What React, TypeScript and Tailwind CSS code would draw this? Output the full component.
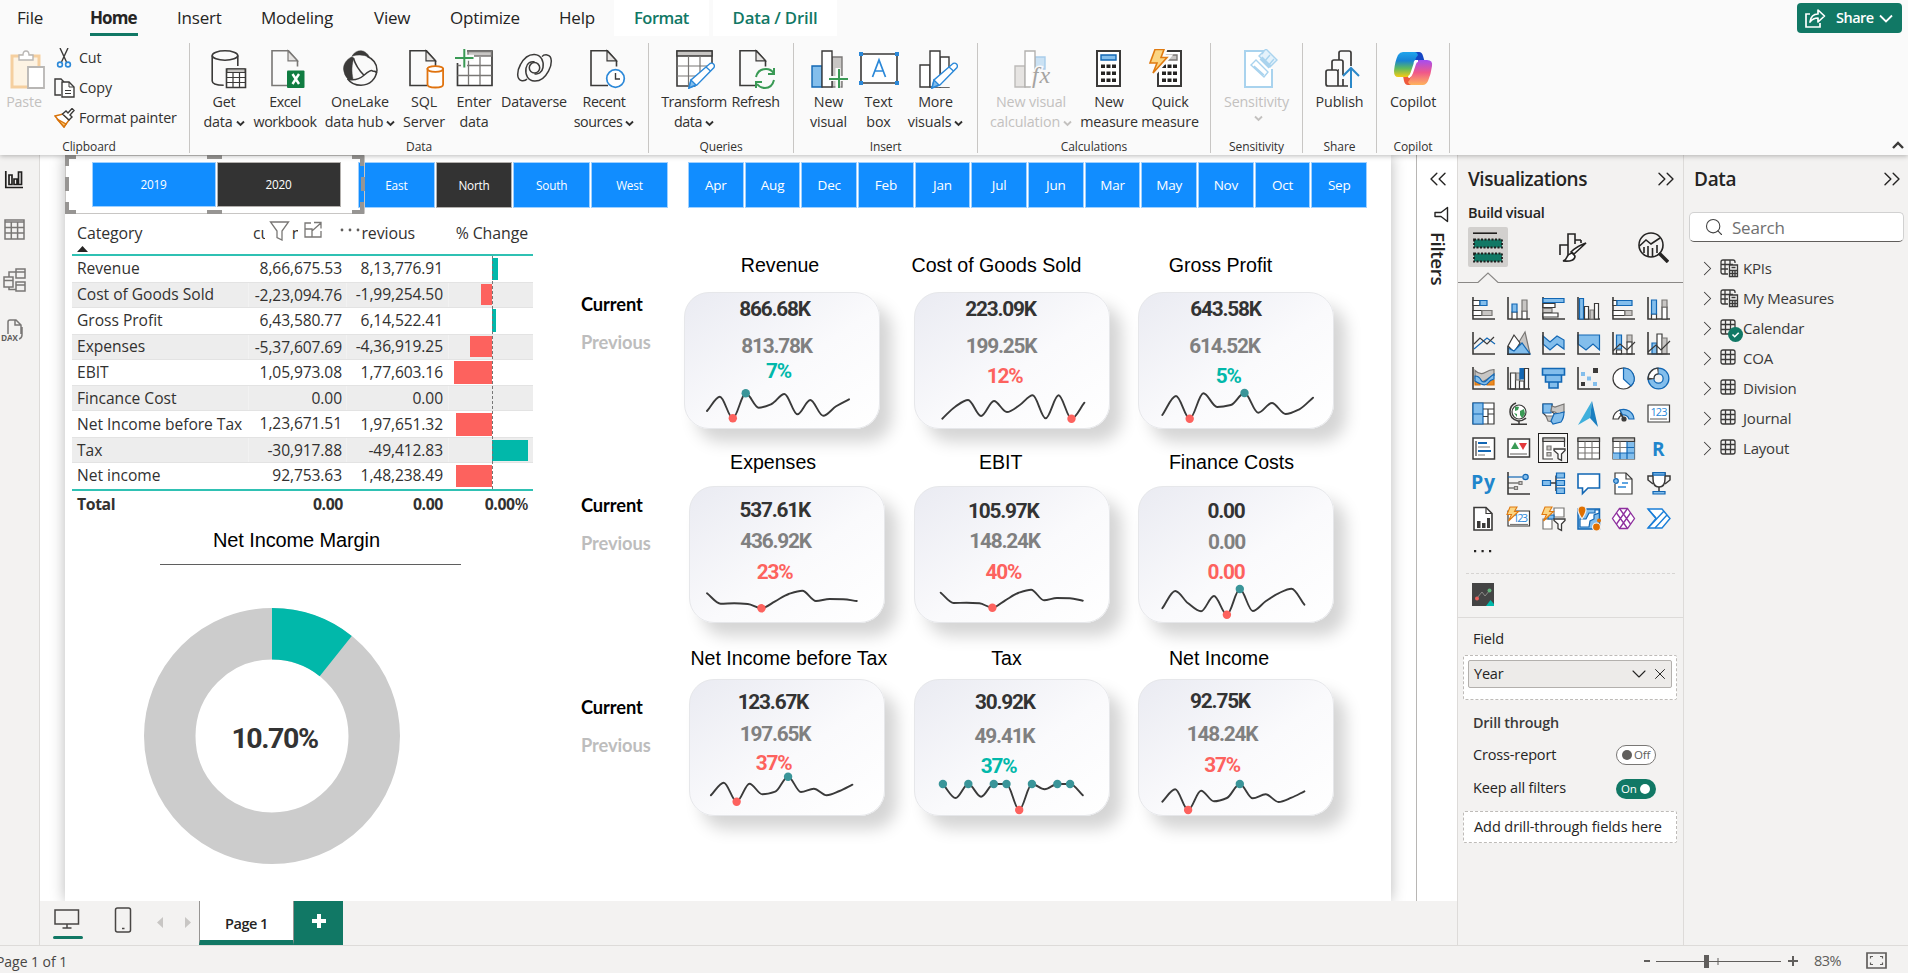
import React from "react";
import { ChevronDown, ChevronRight, ChevronsLeft, ChevronsRight, Search, X } from "lucide-react";

type Kids = { children?: React.ReactNode };

const INK = "#3b3a39";
const BLUE = "#1267b4";
const SKY = "#83beec";
const GREY = "#797775";
const SILVER = "#c8c6c4";

/* ------------------------------------------------------------------ */
/* Ribbon icons                                                        */
/* ------------------------------------------------------------------ */

function Glyph({ w = 38, h = 40, children }: Kids & { w?: number; h?: number }) {
  return (
    <svg width={w} height={h} viewBox={`0 0 ${w} ${h}`} fill="none" stroke={INK} strokeWidth="1.4" className="block shrink-0">
      {children}
    </svg>
  );
}

const Sheet = ({ x = 0 }: { x?: number }) => (
  <g transform={`translate(${x} 0)`} strokeWidth="1.600">
    <path d="M18 36.500H1V1.800h16.500l9 10V17.500" fill="none" />
    <path d="M17 1.800v10h9.500z" fill="#e6e4e2" strokeWidth="1.200" />
  </g>
);

const Pencil = () => (
  <g stroke="#2b88d8">
    <path d="M15 39l2-8L36 14.500q2-1 3.500.5t.5 3.500L23 36z" fill="#fff" transform="translate(-1 0)" />
    <path d="M14 39l2-8 5 5z" fill={SKY} />
    <path d="M31 18l4.500 4" />
  </g>
);

const PasteIcon = () => (
  <Glyph>
    <path d="M5 7h27v31H5z" fill="#fdf3e3" stroke="#f5cf9f" strokeWidth="3" />
    <path d="M12 11V6h4q0-4 3-4t3 4h4v5z" fill="#fff" stroke="#b8b6b4" />
    <path d="M21 18h16v21H21z" fill="#fff" stroke="#b8b6b4" strokeWidth="1.800" />
  </Glyph>
);
const CutIcon = () => (
  <Glyph w={20} h={20}>
    <path d="M6 0l6.500 14M14 0L7.500 14" />
    <circle cx="6" cy="16.500" r="2.400" stroke="#2b88d8" strokeWidth="1.600" />
    <circle cx="14" cy="16.500" r="2.400" stroke="#2b88d8" strokeWidth="1.600" />
  </Glyph>
);
const CopyIcon = () => (
  <Glyph w={21} h={20}>
    <path d="M7 17H1V1h6l3 3" />
    <path d="M8 4h7l5 5v10H8z" fill="#fff" />
    <path d="M15 4v5h5M11 12.500h6M11 15.500h6" strokeWidth="1" />
  </Glyph>
);
const PainterIcon = () => (
  <Glyph w={21} h={20}>
    <path d="M1 8l8-2 6 6-5 7z" fill="#fff" stroke="#d8730b" />
    <path d="M3 11l9 5-2 3z" fill="#f9c46b" stroke="#d8730b" />
    <path d="M8.500 6L12 3l2 2 4-4.500 2 2L16 7l2 2-3 3z" fill="#fff" />
  </Glyph>
);
const DatabaseIcon = () => (
  <Glyph w={36}>
    <ellipse cx="14" cy="6.500" rx="12.800" ry="4.700" strokeWidth="1.600" />
    <path d="M1.200 6.500V32q0 4 11.500 4.300M26.800 6.500V17" strokeWidth="1.600" />
    <path d="M15.500 20h19v18.500h-19z" fill="#fff" strokeWidth="1.600" />
    <path d="M16 20h18v3.500H16z" fill={SILVER} strokeWidth="1" />
    <path d="M16 28.500h18M16 33.500h18M22 24v14M28.500 24v14" strokeWidth="1.200" />
  </Glyph>
);
const ExcelIcon = () => (
  <Glyph w={36}>
    <g stroke={GREY}><Sheet x={1} /></g>
    <rect x="17" y="21.500" width="17.500" height="17.500" rx="1" fill="#107c41" stroke="none" />
    <path d="M22.500 25l6.500 10M29 25l-6.500 10" stroke="#fff" strokeWidth="2.400" />
  </Glyph>
);
const OneLakeIcon = () => (
  <Glyph w={36}>
    <g transform="translate(1 1.200)">
      <path d="M24 6C31 9 34 14.500 34 20c-1 9-7 15-16 15C12 35 7 32 4.500 28.500" strokeWidth="1.500" />
      <path d="M9 6.500C3 9.500.500 14 .500 19q.500 6 4.500 10 3.500 0 5-.500C8.500 22 8.500 14 11 8z" fill={INK} strokeWidth="0.500" />
      <path d="M9 6Q12 .500 18 .500q5.500.500 8.500 6.500Q17 3 9 6z" fill={INK} strokeWidth="0.500" />
      <path d="M10.500 8Q13 17 21 25M5 29q9 2 16-4t8.500-4.200q3.500 0 4.300 2" strokeWidth="1.500" />
    </g>
  </Glyph>
);
const SqlIcon = () => (
  <Glyph w={36}>
    <Sheet x={0} />
    <g stroke="#e0730f" strokeWidth="1.800">
      <path d="M18.500 20v15.500q0 3 7.800 3t7.800-3V20z" fill="#fff" />
      <ellipse cx="26.300" cy="20" rx="7.800" ry="2.800" fill="#fff" />
    </g>
  </Glyph>
);
const EnterDataIcon = () => (
  <Glyph w={40}>
    <path d="M3.500 2h34.500v34.500H3.500z" fill="#fff" strokeWidth="1.700" />
    <path d="M14 2.500h23.500v4.500H14z" fill={SILVER} stroke={GREY} />
    <path d="M3.500 16.500h34M3.500 26.500h34M14.500 8v28M26 8v28" stroke={GREY} strokeWidth="1.300" />
    <path d="M0 0h13v14H0zM13 6h6v5h-6z" fill="#fafafa" stroke="none" />
    <path d="M10 0v19M1 8.700h19" stroke="#fafafa" strokeWidth="6" />
    <path d="M10.300 0v18.500M1 9h18.500" stroke="#3a9a55" strokeWidth="2" />
  </Glyph>
);
const dataverseArm = "M10 25.500q-1.500 2-5 1.700C-1 26.500 0 17 3.500 11 7.500 3.500 13 .800 17.500 1c6.500.500 9.500 6 8.500 13-1 5.500-5 7-8.500 6.300";
const DataverseIcon = () => (
  <Glyph w={37}>
    <g transform="translate(1 4.500)" strokeWidth="1.500">
      <path d={dataverseArm} />
      <path d={dataverseArm} transform="rotate(180 17.500 14.300)" />
      <circle cx="17.500" cy="14.300" r="5.200" />
    </g>
  </Glyph>
);
const RecentIcon = () => (
  <Glyph w={36}>
    <Sheet x={0} />
    <circle cx="25.500" cy="29.500" r="8.800" fill="#fff" stroke="#2b88d8" strokeWidth="1.700" />
    <path d="M25.500 24V30h4.500" />
  </Glyph>
);
const TransformIcon = () => (
  <Glyph w={40}>
    <path d="M2 2h35v35H2z" fill="#fff" strokeWidth="1.600" />
    <path d="M2 2h35v5H2z" fill={SILVER} />
    <path d="M2 17h35M2 27h35M13.500 7v30M25 7v30" stroke={GREY} strokeWidth="1.200" />
    <path d="M20 38h20V15z" fill="#fafafa" stroke="none" />
    <Pencil />
  </Glyph>
);
const RefreshIcon = () => (
  <Glyph>
    <Sheet x={1} />
    <g stroke="#3a9a55" strokeWidth="2">
      <path d="M18 28q2-8 10-8 5 0 7.500 4M36 19v6h-6M36 31q-2 8-9 8-5 0-8-4M18 39v-6h6" />
    </g>
  </Glyph>
);
const NewVisualIcon = () => (
  <Glyph>
    <path d="M1 17h10v21H1z" fill={SKY} stroke={BLUE} />
    <path d="M21 8h10v30H21z" fill={SILVER} stroke={GREY} />
    <path d="M11 2h10v36H11z" fill="#fff" />
    <path d="M27 19v20M18 29.500h19" stroke="#fafafa" strokeWidth="5" />
    <path d="M28 20v19M18 30h19" stroke="#3a9a55" strokeWidth="2" />
  </Glyph>
);
const TextBoxIcon = () => (
  <Glyph w={40}>
    <path d="M2 5h36v29H2z" fill="#fff" strokeWidth="1.600" />
    <path d="M0 3h4v4H0zM36 3h4v4h-4zM0 32h4v4H0zM36 32h4v4h-4z" fill="#2b88d8" stroke="none" />
    <path d="M13.500 28L20 11l6.500 17M15.500 22h9" stroke="#2b88d8" strokeWidth="1.700" />
  </Glyph>
);
const MoreVisualsIcon = () => (
  <Glyph w={40}>
    <path d="M2 16h10v22H2zM22 8h9v30h-9z" fill="#fff" />
    <path d="M12 2h10v36H12z" fill="#fff" />
    <path d="M16 38h22V16z" fill="#fafafa" stroke="none" />
    <Pencil />
  </Glyph>
);
const NewCalcIcon = () => (
  <Glyph>
    <path d="M1 17h10v21H1z" fill="#e6e4e2" stroke="#bdbbb9" />
    <path d="M21 8h10v12H21z" fill="#cbe2f4" stroke="#a9cdea" />
    <path d="M11 2h10v36H11z" fill="#fff" stroke="#b3b1af" />
    <text x="18" y="34" fill="#a5a3a1" stroke="#fafafa" strokeWidth="3" paintOrder="stroke" fontSize="24" fontStyle="italic" fontFamily="Liberation Serif, serif" textLength="18">fx</text>
  </Glyph>
);
const Calculator = ({ grey = false }: { grey?: boolean }) => (
  <g>
    <path d="M7 2h23v35H7z" fill="#fff" strokeWidth="2" />
    <path d="M11 6h15v5H11z" fill={grey ? SILVER : SKY} stroke={grey ? GREY : BLUE} />
    {[15.5, 22.5, 29.5].map((y) => (
      <path key={y} d={`M11 ${y}h4v3.500h-4zM16.500 ${y}h4v3.500h-4zM22 ${y}h4v3.500h-4z`} fill="#252423" stroke="none" />
    ))}
  </g>
);
const NewMeasureIcon = () => (<Glyph><Calculator /></Glyph>);
const QuickMeasureIcon = () => (
  <Glyph>
    <g transform="translate(4 0)"><Calculator grey /></g>
    <path d="M8 0h10l-3 8h6L5 27l4-12H2z" fill="#fafafa" stroke="#fafafa" strokeWidth="5" />
    <path d="M8 0.500h9l-3 8h6L6 24l4-10H3z" fill="#fbd583" stroke="#e07a10" strokeWidth="1.600" />
  </Glyph>
);
const SensitivityIcon = () => (
  <Glyph>
    <g stroke="#a9d3ee">
      <path d="M24 2H5v36h27V20" fill="#fff" strokeWidth="2" />
      <path d="M19 7l7-7 11 11-7 7zM24 2l-2 3M30 6l-6 7M34 10l-6 7" fill="#e4f2fb" />
      <path d="M11 16l5-5 12 12-4 5zM14 17l10 9" fill="#fff" />
      <path d="M21 9l9 9" strokeWidth="4" />
    </g>
  </Glyph>
);
const PublishIcon = () => (
  <Glyph>
    <g strokeWidth="1.700">
      <path d="M25 37H5q-2 0-2-2V23q0-2 2-2h8q2 0 2 2v14" />
      <path d="M9 21v-8q0-2 2-2h7q2 0 2 2v13M15 21h1" />
      <path d="M16 11V4q0-2 2-2h8q2 0 2 2v13" />
      <path d="M20 30v7" />
    </g>
    <path d="M28 39V20M20 27l8-8 8 8" stroke="#2b88c8" strokeWidth="2" />
  </Glyph>
);
const CopilotIcon = () => (
  <Glyph w={40}>
    <defs>
      <linearGradient id="cpA" x1="0" y1="0" x2="0" y2="1"><stop offset="0" stopColor="#21a5ec" /><stop offset=".35" stopColor="#1883d4" /><stop offset=".65" stopColor="#5db960" /><stop offset="1" stopColor="#f5cc14" /></linearGradient>
      <linearGradient id="cpB" x1="0" y1="0" x2="0" y2="1"><stop offset="0" stopColor="#a44df2" /><stop offset=".5" stopColor="#f0588a" /><stop offset="1" stopColor="#ffb45c" /></linearGradient>
    </defs>
    <g stroke="none">
      <path d="M20 3h6q3 0 4 4l1.500 5H26q-3 0-4 3z" fill="#1546c4" />
      <path d="M20 36h-5q-3 0-4-4l-1-5h7q3 0 4-3z" fill="#ef5a3c" />
      <path d="M10 3h12q2 0 3 3-2 2-3 6l-3 12q-1 4-5 4H5q-4 0-4-6Q2 12 5 6q2-3 5-3z" fill="url(#cpA)" />
      <path d="M30 36H18q-2 0-3-3 2-2 3-6l4-12q1-4 5-4h7q6 0 5 6-1 8-4 15-2 4-5 4z" fill="url(#cpB)" />
      <path d="M22.500 12H25q-2 0-3 3l-3 9q-1 3-3 4h-.5q2-1 3-4l3-9q0-2 1-3z" fill="#fff" stroke="#fff" strokeWidth="2" />
    </g>
  </Glyph>
);

/* ------------------------------------------------------------------ */
/* Ribbon                                                              */
/* ------------------------------------------------------------------ */

const Caret = () => (
  <svg width="9" height="7" viewBox="0 0 9 7" className="ml-[3px] mt-[3px] inline-block" fill="none" stroke="currentColor" strokeWidth="1.900">
    <path d="M1 1.500l3.500 3.500L8 1.500" />
  </svg>
);

function Command({ w, icon, a, b, caret, shift = "", off, tight }: { w: string; icon: React.ReactNode; a: string; b?: string; caret?: boolean; shift?: string; off?: boolean; tight?: boolean }) {
  return (
    <div className={`flex flex-col items-center whitespace-nowrap text-[14.300px] leading-5 ${tight ? "tracking-[-0.450px]" : "tracking-[-0.150px]"} ${w} ${off ? "text-[#c3c1bf]" : "text-[#323130]"}`}>
      <div className={`h-[43px] ${shift}`}>{icon}</div>
      <div>{a}</div>
      <div className="flex items-center">{b}{caret && <Caret />}</div>
    </div>
  );
}

function Group({ w, name, inset = "", children }: Kids & { w: string; name: string; inset?: string }) {
  return (
    <section className={`flex h-[110px] flex-col justify-between border-r border-[#c8c6c4] ${w}`}>
      <div className="flex justify-center pt-1.5">{children}</div>
      <div className={`text-center text-[12px] leading-[13px] tracking-[-0.100px] text-[#323130] ${inset}`}>{name}</div>
    </section>
  );
}

function Ribbon() {
  return (
    <header className="relative z-20 h-[155px] bg-[#fafafa] shadow-[0_1px_5px_rgba(0,0,0,0.28)]">
      <nav className="flex h-9 items-center pl-[17px] text-[17px] leading-9 tracking-[-0.200px] text-[#252423]">
        <span className="w-[73px]">File</span>
        <span className="w-[87px]"><span className="inline-block h-9 w-12 border-b-[3px] border-[#117865] text-[17px] font-bold tracking-[-0.900px]">Home</span></span>
        <span className="w-[84px]">Insert</span>
        <span className="w-[113px]">Modeling</span>
        <span className="w-[76px]">View</span>
        <span className="w-[109px]">Optimize</span>
        <span className="w-[55px]">Help</span>
        <span className="w-[95px] bg-white text-center text-[16.500px] font-semibold tracking-[-0.500px] text-[#117865]">Format</span>
        <span className="ml-1 w-[124px] bg-white text-center text-[16.800px] font-semibold tracking-[-0.200px] text-[#117865]">Data / Drill</span>
        <button className="ml-auto mr-1.5 mt-0 flex h-[30px] w-[105px] items-center rounded-[4px] bg-[#117865] pl-2 text-[14.500px] font-semibold leading-none tracking-[-0.500px] text-white">
          <svg width="21" height="20" viewBox="0 0 21 20" fill="none" stroke="#fff" strokeWidth="1.700">
            <path d="M5 6H1v13h14v-4" />
            <path d="M5 14q1-8 8-8V2l6.500 6-6.500 6v-4q-5 0-8 4z" strokeLinejoin="round" />
          </svg>
          <span className="ml-2.5">Share</span>
          <svg width="14" height="9" viewBox="0 0 14 9" className="ml-[5px]" fill="none" stroke="#fff" strokeWidth="1.800"><path d="M1 1.500l6 6 6-6" /></svg>
        </button>
      </nav>
      <div className="mt-[7px] flex h-[110px]">
        <Group w="w-[190px]" name="Clipboard" inset="pr-[11px]">
          <div className="-mb-5 -mr-px flex w-[190px] pl-1.5">
            <Command w="w-9" shift="pl-1" icon={<PasteIcon />} a="Paste" off />
            <div className="-mt-1.5 ml-3 flex flex-col text-[14.300px] leading-[30px] tracking-[-0.150px] text-[#323130]">
              <span className="flex h-[30px] items-center gap-1"><span className="w-[21px]"><CutIcon /></span>Cut</span>
              <span className="flex h-[30px] items-center gap-1"><CopyIcon />Copy</span>
              <span className="flex h-[30px] items-center gap-1"><PainterIcon />Format painter</span>
            </div>
          </div>
        </Group>
        <Group w="w-[459px]" name="Data">
          <Command w="w-16" shift="pl-2.5" icon={<DatabaseIcon />} a="Get" b="data" caret />
          <Command w="w-[58px]" shift="pl-1.5" icon={<ExcelIcon />} a="Excel" b="workbook" tight />
          <Command w="w-[92px]" icon={<OneLakeIcon />} a="OneLake" b="data hub" caret />
          <Command w="w-9" shift="pl-1.5" icon={<SqlIcon />} a="SQL" b="Server" />
          <Command w="w-16" icon={<EnterDataIcon />} a="Enter" b="data" />
          <Command w="w-14" icon={<DataverseIcon />} a="Dataverse" />
          <Command w="w-[84px]" shift="pl-2" icon={<RecentIcon />} a="Recent" b="sources" caret tight />
        </Group>
        <Group w="w-[145px]" name="Queries">
          <div className="flex pl-[3px]">
            <Command w="w-[66px]" shift="pl-px" icon={<TransformIcon />} a="Transform" b="data" caret tight />
            <Command w="w-[57px]" shift="pl-0.5" icon={<RefreshIcon />} a="Refresh" tight />
          </div>
        </Group>
        <Group w="w-[184px]" name="Insert">
          <Command w="w-[54px]" shift="pl-0.5" icon={<NewVisualIcon />} a="New" b="visual" />
          <Command w="w-[46px]" icon={<TextBoxIcon />} a="Text" b="box" />
          <Command w="w-[68px]" shift="pl-1" icon={<MoreVisualsIcon />} a="More" b="visuals" caret />
        </Group>
        <Group w="w-[233px]" name="Calculations">
          <div className="flex pr-1">
            <Command w="w-24" shift="pl-1" icon={<NewCalcIcon />} a="New visual" b="calculation" caret off />
            <Command w="w-[60px]" icon={<NewMeasureIcon />} a="New" b="measure" />
            <Command w="w-[62px]" shift="pr-2" icon={<QuickMeasureIcon />} a="Quick" b="measure" />
          </div>
        </Group>
        <Group w="w-[92px]" name="Sensitivity">
          <Command w="w-20" shift="pl-1" icon={<SensitivityIcon />} a="Sensitivity" caret off />
        </Group>
        <Group w="w-[74px]" name="Share">
          <Command w="w-16" shift="pl-1" icon={<PublishIcon />} a="Publish" />
        </Group>
        <Group w="w-[73px]" name="Copilot">
          <Command w="w-16" icon={<CopilotIcon />} a="Copilot" />
        </Group>
        <svg width="12" height="8" viewBox="0 0 12 8" className="mb-1 ml-auto mr-1 self-end" fill="none" stroke={INK} strokeWidth="2.400">
          <path d="M1 7l5-5 5 5" />
        </svg>
      </div>
    </header>
  );
}

/* ------------------------------------------------------------------ */
/* Left rail                                                           */
/* ------------------------------------------------------------------ */

function Rail() {
  return (
    <aside className="flex w-10 shrink-0 flex-col border-r border-[#dddbd9] bg-[#f3f2f1] pt-4">
      <svg width="28" height="180" viewBox="0 0 28 180" fill="none" stroke="#605e5c" strokeWidth="1.500">
        <g stroke="#201f1e" strokeWidth="1.700">
          <path d="M5.800 0v16.500H23" />
          <path d="M9 4h3v9.500H9zM14 8h3v5.500h-3zM18.500 1h3v12.500h-3z" />
        </g>
        <path d="M5 49h19v19H5zM5 51h19M5 56.500h19M5 62h19M11.300 51v17M17.600 51v17" stroke="#797775" />
        <path d="M4 106h9v10H4zM4 109.500h9M16 98h9v9h-9zM16 101h9M16 111h9v9h-9zM16 114h9M9 106v-5h7M9 116v2.500h7" stroke="#797775" />
        <path d="M8 163v-12q0-2 2-2h6l5 5v9M15 149v5h6M22 156v8q0 3-3 4" stroke="#797775" />
        <text x="1" y="169.500" fontSize="8.500" fontWeight="700" fill="#605e5c" stroke="#f3f2f1" strokeWidth="2" paintOrder="stroke" fontFamily="Open Sans, sans-serif" textLength="17">DAX</text>
      </svg>
    </aside>
  );
}

/* ------------------------------------------------------------------ */
/* Report page                                                         */
/* ------------------------------------------------------------------ */

const rows: [string, string, string, number][] = [
  ["Revenue", "8,66,675.53", "8,13,776.91", 6],
  ["Cost of Goods Sold", "-2,23,094.76", "-1,99,254.50", -11],
  ["Gross Profit", "6,43,580.77", "6,14,522.41", 4],
  ["Expenses", "-5,37,607.69", "-4,36,919.25", -22],
  ["EBIT", "1,05,973.08", "1,77,603.16", -38],
  ["Fincance Cost", "0.00", "0.00", 0],
  ["Net Income before Tax", "1,23,671.51", "1,97,651.32", -36],
  ["Tax", "-30,917.88", "-49,412.83", 36],
  ["Net income", "92,753.63", "1,48,238.49", -36],
];

function IncomeTable() {
  return (
    <div className="absolute left-[7px] top-[60px] w-[461px] text-[15.600px] tracking-[-0.100px] text-[#323130]">
      <div className="relative flex h-[41px] border-b-2 border-[#2fc1b3] text-[15.900px] leading-9">
        <span className="w-[181px] pl-[5px]">Category</span>
        <span className="w-[99px]">current</span>
        <span>Previous</span>
        <span className="ml-auto pr-[5px]">% Change</span>
        {/* hover toolbar of the visual above */}
        <div className="absolute left-[193px] top-0 flex h-9 w-[27px] items-center bg-white pl-1">
          <svg width="21" height="20" viewBox="0 0 21 20" className="-mt-1" fill="none" stroke="#797775" strokeWidth="1.300">
            <path d="M1.500 1h18l-6.500 9v9l-5-2.500V10z" />
          </svg>
        </div>
        <div className="absolute left-[226px] top-0 flex h-9 w-[64px] items-center bg-white pl-1.5">
          <svg width="58" height="18" viewBox="0 0 58 18" className="-mt-1.5" fill="none" stroke="#797775" strokeWidth="1.300">
            <path d="M1 8V2h6M1 8h7v8H1zM8 16h9v-6M10 1.500h7v6M8.500 9.500L17 2" />
            <g fill="#605e5c" stroke="none"><circle cx="38" cy="9" r="1.400" /><circle cx="46" cy="9" r="1.400" /><circle cx="54" cy="9" r="1.400" /></g>
          </svg>
        </div>
        <svg width="11" height="6" viewBox="0 0 11 6" className="absolute left-[5px] top-[31px]"><path d="M0 6l5.500-6L11 6z" fill="#252423" /></svg>
      </div>
      <div className="relative border-b-2 border-[#2fc1b3]">
        {rows.map(([name, cur, prev, bar], i) => (
          <div key={name} className={`flex h-[25.890px] items-center leading-[25px] ${i % 2 ? "border-y border-[#e3e3e3] bg-[#ededed]" : "bg-white"}`}>
            <span className="w-[176px] pl-[5px] tracking-[-0.020px]">{name}</span>
            <span className="h-full w-[99px] border-x border-white/30 pr-1 text-right">{cur}</span>
            <span className="w-[101px] pr-[5px] text-right">{prev}</span>
            <span className="relative h-full flex-1 border-l border-white/30">
              <span
                className={`absolute inset-y-[1.500px] ${bar > 0 ? "bg-[#01b8aa]" : "bg-[#fd625e]"}`}
                style={{ left: bar < 0 ? 43 + bar : 43, width: Math.abs(bar) }}
              />
            </span>
          </div>
        ))}
        <div className="absolute inset-y-0 left-[420px] border-l border-dashed border-[#777]" />
      </div>
      <div className="flex h-[28px] text-[15.800px] font-bold leading-[26px] tracking-[-0.400px]">
        <span className="w-[176px] pl-[5px]">Total</span>
        <span className="w-[99px] pr-1 text-right">0.00</span>
        <span className="w-[101px] pr-[5px] text-right">0.00</span>
        <span className="flex-1 pr-[5px] text-right">0.00<span className="font-semibold">%</span></span>
      </div>
    </div>
  );
}

function YearSlicer() {
  return (
    <div className="absolute left-0 top-0 h-[59px] w-[300px]">
      <div className="flex gap-px pl-[26.500px] pt-[7px] text-[11.800px] leading-[42px] tracking-[-0.200px] text-white">
        <div className="h-[45px] w-[124px] border border-[#9fd0ff] bg-[#118dff] text-center">2019</div>
        <div className="h-[45px] w-[124px] border border-[#b3b0ad] bg-[#333] text-center">2020</div>
      </div>
      <svg width="302" height="60" viewBox="0 0 302 60" className="absolute left-0 top-0" fill="none">
        <path d="M0.500 0.500h299v58H0.500z" stroke="#c8c6c4" />
        <g stroke="#979593" strokeWidth="4">
          <path d="M2 11V2h9M142 2h15M287 2h10v9M2 22v14M298 22v14M2 47v10h9M142 57h15M287 57h10V47" />
        </g>
      </svg>
    </div>
  );
}

function RegionSlicer() {
  return (
    <div className="absolute left-[293px] top-[7px] flex gap-px text-[11.800px] leading-[44px] tracking-[-0.200px] text-white">
      {["East", "North", "South", "West"].map((r) => (
        <div key={r} className={`h-[46px] w-[76.700px] border text-center ${r === "North" ? "border-[#b3b0ad] bg-[#333]" : "border-[#9fd0ff] bg-[#118dff]"}`}>{r}</div>
      ))}
    </div>
  );
}

function MonthSlicer() {
  return (
    <div className="absolute left-[623px] top-[7px] flex w-[679px] gap-px text-[13.500px] leading-[44px] tracking-[-0.200px] text-white">
      {["Apr", "Aug", "Dec", "Feb", "Jan", "Jul", "Jun", "Mar", "May", "Nov", "Oct", "Sep"].map((m) => (
        <div key={m} className="h-[46px] flex-1 border border-[#9fd0ff] bg-[#118dff] text-center">{m}</div>
      ))}
    </div>
  );
}

function MarginDonut() {
  const share = 0.107 * 2 * Math.PI * 102.25;
  return (
    <div className="absolute left-[95px] top-[370px] flex w-[301px] flex-col items-center font-['Liberation_Sans',sans-serif] text-black">
      <div className="w-full border-b border-[#5f5f5f] pb-[10px] pr-7 pt-px text-center text-[20px] leading-[28px] tracking-[-0.120px]">Net Income Margin</div>
      <div className="relative ml-0 mt-[43px] h-64 w-64 -translate-x-[39px]">
        <svg width="256" height="256" viewBox="0 0 256 256" fill="none" strokeWidth="51.500">
          <circle cx="128" cy="128" r="102.250" stroke="#ccc" />
          <circle cx="128" cy="128" r="102.250" stroke="#01b8aa" strokeDasharray={`${share} 1000`} transform="rotate(-90 128 128)" />
        </svg>
        <div className="absolute inset-0 flex items-center justify-center pl-[6px] pt-1.5 font-[Roboto,sans-serif] text-[28.500px] font-bold tracking-[-1.450px] text-[#333]">10.70%</div>
      </div>
    </div>
  );
}

type Value = [string, number, number, "dark" | "grey" | "good" | "bad"];
type Kpi = {
  title: string;
  tx: number;
  ty: number;
  x: number;
  y: number;
  values: Value[];
  from: number;
  to: number;
  line: number[];
  high: number[];
  low: number[];
};

const kpis: Kpi[] = [
  { title: "Revenue", tx: 780.5, ty: 265, x: 684, y: 292, values: [["866.68K", 775, 308.5, "dark"], ["813.78K", 777, 346, "grey"], ["7%", 779, 371, "good"]], from: 707, to: 849, line: [411, 396.7, 418.3, 393.3, 407.7, 404, 394, 414.3, 400, 415.7, 406.3, 399.3], high: [3], low: [2] },
  { title: "Cost of Goods Sold", tx: 997, ty: 265, x: 914, y: 292, values: [["223.09K", 1001, 308.5, "dark"], ["199.25K", 1001.6, 346, "grey"], ["12%", 1005, 376, "bad"]], from: 942.3, to: 1084.4, line: [418.7, 406.7, 400, 416, 401, 412, 405, 395.3, 418.3, 395.3, 418.7, 402.7], high: [], low: [10] },
  { title: "Gross Profit", tx: 1221, ty: 265, x: 1138, y: 292, values: [["643.58K", 1226, 308.5, "dark"], ["614.52K", 1225, 346, "grey"], ["5%", 1228.7, 376, "good"]], from: 1162.3, to: 1313, line: [415, 396, 418.7, 393.3, 407, 405, 393, 412.7, 403, 414, 409.3, 397.7], high: [6], low: [2] },
  { title: "Expenses", tx: 773.6, ty: 462, x: 689, y: 486, values: [["537.61K", 775.3, 509.5, "dark"], ["436.92K", 776, 540.5, "grey"], ["23%", 775, 571.5, "bad"]], from: 707, to: 856.8, line: [593.3, 603.7, 603.3, 604, 608.3, 601.3, 594, 590.7, 601, 599, 599.3, 601], high: [], low: [4] },
  { title: "EBIT", tx: 1001.2, ty: 462, x: 914, y: 486, values: [["105.97K", 1003.8, 510.5, "dark"], ["148.24K", 1005, 541, "grey"], ["40%", 1003.8, 571.5, "bad"]], from: 940.7, to: 1082.8, line: [592.7, 603, 602.7, 603.3, 607.7, 600.3, 593, 589.7, 600.3, 598, 598.3, 600.7], high: [], low: [4] },
  { title: "Finance Costs", tx: 1232, ty: 462, x: 1138, y: 486, values: [["0.00", 1226.5, 510.5, "dark"], ["0.00", 1227, 541.5, "grey"], ["0.00", 1226.5, 571.5, "bad"]], from: 1162.3, to: 1304.4, line: [608.3, 591, 603.3, 611.3, 596, 614.7, 589, 611, 601.3, 593.3, 588.7, 604.7], high: [6], low: [5] },
  { title: "Net Income before Tax", tx: 789.3, ty: 658, x: 689, y: 679, values: [["123.67K", 773.4, 702, "dark"], ["197.65K", 775.6, 733.5, "grey"], ["37%", 774, 763, "bad"]], from: 710.9, to: 852.4, line: [795.3, 782.7, 801.7, 783.7, 794.3, 791.7, 776.7, 792, 788.7, 795.3, 791, 784.7], high: [6], low: [2] },
  { title: "Tax", tx: 1007, ty: 658, x: 914, y: 679, values: [["30.92K", 1005.4, 702, "dark"], ["49.41K", 1005, 735.5, "grey"], ["37%", 999, 766, "good"]], from: 942.9, to: 1082.8, line: [784, 798, 784, 796.7, 784, 784, 810, 784, 789.3, 784, 784, 795.3], high: [0, 2, 4, 5, 7, 9, 10], low: [6] },
  { title: "Net Income", tx: 1219.5, ty: 658, x: 1138, y: 679, values: [["92.75K", 1220.5, 701, "dark"], ["148.24K", 1222.6, 733.5, "grey"], ["37%", 1222.6, 765, "bad"]], from: 1162.3, to: 1304.4, line: [801.7, 789.3, 810, 790.7, 801.3, 798, 784, 798.3, 794.3, 802, 797.7, 791.3], high: [6], low: [2] },
];

const tone = { dark: "text-[#333]", grey: "text-[#808080]", good: "text-[#01b8aa]", bad: "text-[#fd625e]" };

/** Monotone cubic through equally spaced points. */
function smooth(pts: [number, number][]) {
  const n = pts.length;
  const h = pts[1][0] - pts[0][0];
  const d = pts.slice(1).map((p, i) => (p[1] - pts[i][1]) / h);
  const m = pts.map((_, i) => {
    if (i === 0) return d[0];
    if (i === n - 1) return d[n - 2];
    return d[i - 1] * d[i] <= 0 ? 0 : (2 * d[i - 1] * d[i]) / (d[i - 1] + d[i]);
  });
  let out = `M${pts[0][0]} ${pts[0][1]}`;
  for (let i = 0; i < n - 1; i++) {
    out += `C${pts[i][0] + h / 3} ${pts[i][1] + (m[i] * h) / 3} ${pts[i + 1][0] - h / 3} ${pts[i + 1][1] - (m[i + 1] * h) / 3} ${pts[i + 1][0]} ${pts[i + 1][1]}`;
  }
  return out;
}

function KpiCard({ k }: { k: Kpi }) {
  const step = (k.to - k.from) / 11;
  const pts = k.line.map((y, i): [number, number] => [k.from + i * step - k.x, y - k.y]);
  return (
    <>
      <div className="absolute -translate-x-1/2 -translate-y-1/2 whitespace-nowrap text-[19.600px] leading-6 text-black font-['Liberation_Sans',sans-serif]" style={{ left: k.tx - 65.5, top: k.ty - 155 }}>{k.title}</div>
      <div className="absolute h-[137px] w-[196px] rounded-[25px] border border-[#e6e7ea] bg-linear-to-br from-[#eaebf2] via-[#fafafc] via-55% to-white shadow-[12px_13px_16px_rgba(0,0,0,0.17)]" style={{ left: k.x - 65, top: k.y - 155 }}>
        {k.values.map(([v, x, y, t], i) => (
          <div key={i} className={`absolute -translate-x-1/2 -translate-y-1/2 whitespace-nowrap font-[Roboto,sans-serif] text-[20.800px] font-bold leading-6 tracking-[-1.200px] ${tone[t]}`} style={{ left: x - k.x - 1.5, top: y - k.y - 1 }}>{v}</div>
        ))}
        <svg width="196" height="137" viewBox="1 1 196 137" fill="none" className="absolute left-0 top-0">
          <path d={smooth(pts)} stroke="#3a3a3a" strokeWidth="1.900" strokeLinecap="round" />
          {k.high.map((i) => <circle key={i} cx={pts[i][0]} cy={pts[i][1]} r="4.200" fill="#3a9599" />)}
          {k.low.map((i) => <circle key={i} cx={pts[i][0]} cy={pts[i][1]} r="4.200" fill="#fd625e" />)}
        </svg>
      </div>
    </>
  );
}

function ReportPage() {
  return (
    <div className="relative ml-[25px] h-[746px] w-[1326px] bg-white shadow-[0_0_14px_rgba(0,0,0,0.28)]">
      <RegionSlicer />
      <YearSlicer />
      <MonthSlicer />
      <IncomeTable />
      <MarginDonut />
      {["top-[137px]", "top-[338px]", "top-[540px]"].map((t) => (
        <div key={t} className={`absolute left-[516px] flex flex-col gap-[14px] font-[Lato,sans-serif] text-[18.300px] font-bold leading-6 tracking-[-0.100px] ${t}`}>
          <span className="text-black">Current</span>
          <span className="text-[#bdbdbd]">Previous</span>
        </div>
      ))}
      {kpis.map((k) => <KpiCard key={k.title} k={k} />)}
    </div>
  );
}

/* ------------------------------------------------------------------ */
/* Visual gallery                                                      */
/* ------------------------------------------------------------------ */

const Axis = () => <path d="M1 0v22h22" strokeWidth="1.600" />;
const B = { fill: SKY, stroke: BLUE };
const G = { fill: SILVER, stroke: GREY };
const W = { fill: "#fff", stroke: INK };

const Bolt = () => <path d="M3 0h7L7.500 4.500h4L1.500 14l3-6.500H0z" fill="#fbd583" stroke="#e07a10" strokeWidth="1.100" />;
const Funnel = () => <path d="M12 12h11v1.500L19.500 17v6.500L16 21.500V17L12 13.500z" fill="#fff" stroke={INK} strokeWidth="1.300" />;

const visuals: React.ReactNode[] = [
  <><Axis /><path d="M1 3.500h7v5H1z" {...W} /><path d="M8 3.500h7v5H8z" {...B} /><path d="M1 13.500h9v5H1z" {...W} /><path d="M10 13.500h10v5H10z" {...G} /></>,
  <><Axis /><path d="M5 15h5v7H5z" {...W} /><path d="M5 7h5v8H5z" {...B} /><path d="M15 14h5v8h-5z" {...W} /><path d="M15 3h5v11h-5z" {...G} /></>,
  <><Axis /><path d="M1 1.500h21v4H1z" {...B} /><path d="M1 6.500h12v4H1z" {...W} /><path d="M1 11.500h9v4H1z" {...G} /><path d="M1 16h15v4H1z" {...W} /></>,
  <><Axis /><path d="M2.500 1.500h4V22h-4z" {...B} /><path d="M7.500 9.500h4V22h-4z" {...W} /><path d="M13 13h4v9h-4z" {...G} /><path d="M17.500 6.500h4V22h-4z" {...W} /></>,
  <><Axis /><path d="M1 3.500h4v5H1z" {...W} /><path d="M5 3.500h15v5H5z" {...B} /><path d="M1 13.500h12v5H1z" {...W} /><path d="M13 13.500h7v5h-7z" {...G} /></>,
  <><Axis /><path d="M4.500 17h5v5h-5z" {...W} /><path d="M4.500 3h5v14h-5z" {...B} /><path d="M15 10h5v12h-5z" {...W} /><path d="M15 3h5v7h-5z" {...G} /></>,
  <><Axis /><path d="M2 17l13-11 8 6" stroke={BLUE} /><path d="M2 12l6-6 7 6 7-7" /></>,
  <><path d="M18 0l5 22h-9l-2-12z" {...G} /><path d="M7 3l6 8-6 9-6-6z" {...W} /><path d="M1 16l6 3 8-8 8 11H1z" {...B} /><path d="M0 22.200h23M1 14v8" strokeWidth="1.500" /></>,
  <><path d="M1 4l7 6 7-6 7 4v9l-7-5-7 6-7-6z" {...B} /><Axis /></>,
  <><path d="M1 3h21.500v15L16 12l-7 6-8-6z" {...B} /><Axis /></>,
  <><path d="M4.500 3h5v14h-5z" {...B} /><path d="M15 3h5v7h-5z" {...G} /><path d="M15 10h5v12h-5zM4.500 18h5v4h-5z" {...W} /><Axis /><path d="M1 19l7-7 7 6 8-8" /></>,
  <><path d="M5 11h5v11H5z" {...B} /><path d="M10 2h5v20h-5z" {...W} /><path d="M15 6h5v16h-5z" {...G} /><Axis /><path d="M1 20l8-7 5 5 9-9" /></>,
  <><path d="M3 3.500q5 5 10 2t9-3v6q-5 2-9 5t-10-2z" fill={SILVER} stroke={GREY} /><path d="M3 13h5v5H3zM15 13h7v5h-7z" fill="#ec8a22" stroke="#d8730b" /><path d="M3 9q4 0 6 4t6 0 7-6v5q-4 1-6 4t-7 1-6-3z" {...B} /><Axis /></>,
  <><path d="M3.500 6h5v16h-5z" {...W} /><path d="M9 6h4v7H9z" {...G} /><path d="M13 1.500h3.500V12H13z" fill={BLUE} stroke={BLUE} /><path d="M17.500 1.500h4V22h-4zM12.500 14H17v8h-4.500z" {...W} /><Axis /></>,
  <><path d="M0.500 1.500h22v6.500h-22zM3.500 8h16v7h-16zM7 15h9v6H7z" {...B} strokeWidth="1.600" /></>,
  <><Axis /><g stroke="none"><path d="M16 1h5v5h-5zM4 15h4v4H4z" fill={INK} /><path d="M4 5h4v4H4zM10 9.500h4v4h-4zM16 15h4v4h-4z" fill={SKY} /></g></>,
  <><circle cx="11.500" cy="11.500" r="10.500" {...W} /><path d="M11.500 1a10.500 10.500 0 0 1 7.500 18l-7.500-7z" {...B} /></>,
  <><circle cx="11.500" cy="11.500" r="7.500" stroke={BLUE} strokeWidth="7" /><circle cx="11.500" cy="11.500" r="7.500" stroke={SKY} strokeWidth="4.500" /><path d="M4 12.500A7.500 7.500 0 0 1 11.500 4" stroke={INK} strokeWidth="7" /><path d="M4.100 11A7.500 7.500 0 0 1 10.500 4.100" stroke="#fff" strokeWidth="4.500" /></>,
  <><path d="M1 1h21v21H1z" {...W} /><path d="M1 1h10v11H1zM1 12h10v10H1z" {...B} /><path d="M11 7h11M16 7v15M11 14.500h5M16 12h6" /></>,
  <><circle cx="12" cy="10" r="7" {...W} /><path d="M8 5q2-1 4 0l-1 3-3 1zM13 9l4-2 1 5-3 4-2-3zM7 11l3 1v3z" fill="#3a9a55" stroke="none" /><path d="M9 1Q3 3 3 10t8 9q5 0 8-3M12 19v3M4 22.300h16" strokeWidth="1.500" /></>,
  <><path d="M1 2h9v8l3 2-2 6-4-1-6-6z" {...W} /><path d="M1 2h9l-1 9H1z" {...B} /><path d="M10 4l3 1 9-3v8q-2 4-5 3l-4-3-4-1z" {...G} /><path d="M4 14h8l-1 6-5-1z" {...G} /><path d="M12 12l6-1 4-1q0 6-3 10l-8 2-2-3z" {...B} /></>,
  <><path d="M15 -1L1 23l12-7z" fill="#3fb0dc" stroke="none" /><path d="M15 -1l6 26-8-9z" fill="#1b7fc0" stroke="none" /></>,
  <><path d="M1 17a10.500 10.500 0 0 1 7-9l2.500 5a5.500 5.500 0 0 0-4 4z" {...W} /><path d="M8 8a10.500 10.500 0 0 1 14 9h-5a5.500 5.500 0 0 0-6.500-4z" {...B} /><path d="M12 17l-4-6" strokeWidth="1.500" /><circle cx="12" cy="17" r="2" fill={INK} /></>,
  <><path d="M1 3h21.500v17H1z" {...W} /><text x="3.500" y="13.500" fontSize="11" fill="#2b88d8" stroke="none" fontFamily="Open Sans, sans-serif" textLength="17">123</text><path d="M3 17h17" stroke={GREY} /></>,

  <><path d="M1 1h21.500v21H1z" {...W} strokeWidth="1.500" /><path d="M4 4v15" /><path d="M6 6h9M6 14h13" stroke={BLUE} strokeWidth="2" /><path d="M6 10h12M6 18h7" stroke={GREY} strokeWidth="1" /></>,
  <><path d="M1 2h21.500v18H1z" {...W} strokeWidth="1.500" /><path d="M4 12l4-7 4 7z" fill="#3a9a55" stroke="none" /><path d="M12 6h8l-4 7z" fill="#e3383b" stroke="none" /><path d="M3 17h17" stroke={GREY} /></>,
  <><path d="M1 1h21.500v21H1z" {...W} /><path d="M1 1h21.500v3.500H1z" fill={SILVER} /><path d="M5 9h4v4H5zM5 15.500h4v3.500H5z" {...G} /><path d="M11 10h13v14H11z" fill="#f3f2f1" stroke="none" /><Funnel /></>,
  <><path d="M1 1h21.500v21H1z" {...W} /><path d="M1 1h21.500v3.500H1z" fill={SILVER} /><path d="M1 10.500h21M1 16h21M8 4.500V22M15 4.500V22" stroke={GREY} strokeWidth="1.100" /></>,
  <><path d="M1 1h21.500v21H1z" {...W} /><path d="M15 4.500h7.500V22H1v-6h14z" fill={SKY} stroke="none" /><path d="M1 1h21.500v3.500H1z" fill={SILVER} /><path d="M1 10.500h14M8 4.500V16" stroke={GREY} /><path d="M15 10.500h7M1 16h21M8 16v6M15 4.500V22" stroke={BLUE} /></>,
  <><text x="5" y="18.500" fontSize="19" fontWeight="700" fill="#1f86cc" stroke="none" fontFamily="Open Sans, sans-serif" textLength="12">R</text></>,
  <><text x="-1" y="16.500" fontSize="19.500" fontWeight="700" fill="#1f86cc" stroke="none" fontFamily="Open Sans, sans-serif" textLength="24">Py</text></>,
  <><Axis /><path d="M1 5h14" stroke={BLUE} /><circle cx="18.500" cy="5" r="2.700" {...B} /><path d="M1 11h11M1 16h7" /><path d="M12 9.500h3v3h-3zM7.500 14.500h3v3h-3z" {...G} /></>,
  <><path d="M8 11h6M14 3.500v15.500M11 11h3" strokeWidth="1.500" /><path d="M0.500 8.500h8v5h-8zM14.500 1h8v5h-8zM14.500 8.500h8v5h-8zM14.500 16h8v5.500h-8z" {...B} /></>,
  <><path d="M1 2h21.500v14H11l-5.500 5.500V16H1z" fill="#fff" stroke={BLUE} strokeWidth="1.600" /></>,
  <><path d="M3 6V1h11l6 6v15H3V12" fill="#fff" stroke={INK} /><path d="M14 1v6h6" /><circle cx="4" cy="9" r="2.300" {...B} /><path d="M10 11h6M6 15h8" stroke="#2b88d8" strokeWidth="1.300" /></>,
  <><path d="M6 1h12v6q0 8-6 8t-6-8z" {...W} strokeWidth="1.500" /><path d="M6 0.700h12v2.500H6z" {...B} /><path d="M6 4H1v4l5 4M18 4h5v4l-5 4M12 15v4" strokeWidth="1.500" /><path d="M6 19.500h12v2.500H6z" {...B} /></>,

  <><path d="M2 0.500h12l6 6V23H2z" fill="#fff" stroke={INK} strokeWidth="1.600" /><path d="M14 0.500v6h6" /><path d="M5 14h3.500v7H5zM10 16h3.500v5H10zM15 11h3v10h-3z" fill={INK} stroke="none" /></>,
  <><path d="M1 4h21.500v15H1z" {...W} /><path d="M3 17.500h18" stroke={GREY} /><text x="6" y="14.500" fontSize="11" fill="#2b88d8" stroke="none" fontFamily="Open Sans, sans-serif" textLength="15">123</text><Bolt /></>,
  <><path d="M12 1h10v9H12zM1 12h9v10H1z" fill="#fff" stroke={GREY} /><path d="M6 8h6v4H6z" {...B} /><Funnel /><Bolt /></>,
  <><path d="M1 2h21.500v20H1z" {...B} strokeWidth="1.500" /><path d="M12 6h6v-3h4v3l-5 2v4l-4 2-1 6H3v-8h6z" fill="#fff" stroke={BLUE} /><path d="M1 3q0-4 4-4t4 4q0 3-4 9-4-6-4-9z" fill="#e07000" stroke="#f3f2f1" /><circle cx="19.500" cy="20" r="4" fill="#e07000" stroke="#f3f2f1" /><circle cx="22" cy="13.500" r="2" fill="#e07000" stroke="none" /></>,
  <g stroke="#8e2f9e" strokeWidth="1.300"><path d="M7.500 1.500h8L22.500 11.500l-7 10h-8L0.500 11.500z" fill="#fff" /><path d="M7.500 1.500L18.500 17M15.500 1.500L4.500 17M7.500 21.500l11-15.500M15.500 21.500L4.500 6" /></g>,
  <g stroke="#1b7fd8" strokeWidth="1.400"><path d="M1 2h14l8 9.500-8 9.500H1l8-9.500z" fill="#fff" /><path d="M1 21L17 4M8 21L20 8M1 2l8 9" /></g>,
];

function VisualGallery() {
  return (
    <div className="grid grid-cols-[repeat(6,35px)] pl-[14px] pt-[15px]">
      {visuals.map((v, i) => (
        <div key={i} className="relative h-[35px] w-[35px]">
          {i === 26 && <span className="absolute -left-1 -top-1 h-[30px] w-[30px] border border-[#201f1e] bg-[#f8f7f6]" />}
          <svg width="23" height="23" viewBox="0 0 23 23" fill="none" stroke={INK} strokeWidth="1.200" className="relative overflow-visible">{v}</svg>
        </div>
      ))}
    </div>
  );
}

/* ------------------------------------------------------------------ */
/* Side panes                                                          */
/* ------------------------------------------------------------------ */

function FiltersPane() {
  return (
    <aside className="flex w-[41px] shrink-0 flex-col border-l border-[#b8b6b4] bg-white pl-[7px] pt-[10px]">
      <ChevronsLeft className="h-7 w-7 text-[#252423]" strokeWidth={1.2} />
      <svg width="15" height="17" viewBox="0 0 15 17" className="ml-2.5 mt-[13px]" fill="none" stroke="#252423" strokeWidth="1.400">
        <path d="M13.500 1.500v14L7 10.500H1v-4h6z" strokeLinejoin="round" />
      </svg>
      <span className="ml-0.5 mt-[9px] text-[18.800px] font-semibold leading-[24px] tracking-[-0.400px] text-[#252423] [inline-size:60px] w-6 [writing-mode:vertical-rl]">Filters</span>
    </aside>
  );
}

function VisualizationsPane() {
  return (
    <aside className="flex w-[226px] shrink-0 flex-col border-l border-[#dddbd9] bg-[#f3f2f1] text-[14.500px] text-[#252423]">
      <div className="flex items-center justify-between pl-2.5 pr-[3px] pt-[8px]">
        <h2 className="text-[19px] font-semibold leading-8 tracking-[-0.500px]">Visualizations</h2>
        <ChevronsRight className="h-7 w-7" strokeWidth={1.2} />
      </div>
      <div className="pl-2.5 pt-[7px] text-[14.500px] font-semibold leading-[22px] tracking-[-0.300px]">Build visual</div>
      <div className="flex pl-2.5 pt-[3px]">
        <span className="flex h-10 w-10 items-center justify-center rounded-[2px] bg-[#d2d0ce]">
          <svg width="30" height="31" viewBox="0 0 30 31" fill="none" stroke="#201f1e">
            <path d="M0 1.200h24" strokeWidth="1.600" />
            <path d="M1 7.500h28v8H1zM1 21.500h28v8H1z" fill="#117865" strokeWidth="1.800" strokeDasharray="2 1.500" />
          </svg>
        </span>
        <svg width="28" height="30" viewBox="0 0 28 30" className="ml-[51px] mt-1.5" fill="none" stroke="#252423" strokeWidth="1.600">
          <path d="M1 22V12h8M9 18V1h7v10M9 22V12M16 7h6M22 7v3" />
          <path d="M27 10L15 21l-3-2Q18 13 27 10z" fill="#fff" />
          <path d="M13 20l3 3q0 6-12 5 3-1 4-4t5-4z" fill="#fff" />
        </svg>
        <svg width="31" height="31" viewBox="0 0 31 31" className="ml-[51px] mt-[5px]" fill="none" stroke="#252423" strokeWidth="1.600">
          <circle cx="13" cy="13" r="12" />
          <path d="M1.500 14L8 8l5 4 9-6M6 15v6M10 14v10M14.500 16v9M19 13v8" />
          <path d="M21 21l9 9" strokeWidth="3.500" />
        </svg>
      </div>
      <svg width="225" height="18" viewBox="0 0 225 18" fill="none" stroke="#8a8886" strokeWidth="1.200" className="block">
        <path d="M0 15.500h20L30 6l10 9.500h186" />
      </svg>
      <div className="-mt-[3px]"><VisualGallery /></div>
      <svg width="20" height="31" viewBox="0 0 20 31" className="ml-[15px]" fill="#252423">
        <path d="M1 8h2.200v2.200H1zM8.500 8h2.200v2.200H8.500zM16 8h2.200v2.200H16z" />
      </svg>
      <div className="mx-2 border-t border-dashed border-[#d6d4d2]" />
      <svg width="22" height="23" viewBox="0 0 22 23" className="ml-[14px] mt-[9px]" fill="none">
        <path d="M0 0h22v23H0z" fill="#444" />
        <path d="M5 15l5-6 3 4 5-6" stroke="#8a8886" />
        <circle cx="5" cy="15.500" r="2" fill="#e9605c" /><circle cx="17.500" cy="7.500" r="2" fill="#62b57c" /><path d="M14 23l4.500-6L22 21v2z" fill="#01b8aa" />
      </svg>
      <div className="mt-[11px] border-t border-[#dddbd9] pl-[15px] pt-[9px] leading-6 tracking-[-0.200px]">Field</div>
      <div className="ml-[5px] mt-[4px] h-[45px] w-[214px] rounded-[2px] border border-dashed border-[#bebbb8] bg-white p-1">
        <div className="flex h-7 items-center rounded-[2px] border border-[#b3b0ad] bg-[#edebe9] pl-[5px] pr-0.5 tracking-[-0.200px]">
          <span className="flex-1">Year</span>
          <ChevronDown className="mr-0 h-6 w-6" strokeWidth={1.1} />
          <X className="h-[18px] w-[18px]" strokeWidth={1.3} />
        </div>
      </div>
      <div className="mt-[11px] pl-[15px] text-[14.400px] font-semibold leading-6 tracking-[-0.200px] text-[#3b3a39]">Drill through</div>
      <div className="mt-2.5 flex h-5 items-center justify-between pl-[15px] pr-[27px] tracking-[-0.150px]">
        Cross-report
        <span className="flex h-5 w-10 items-center gap-0.5 rounded-full border border-[#797775] bg-white pl-[5px] text-[11.500px] text-[#605e5c]"><i className="h-[10px] w-[10px] rounded-full bg-[#605e5c]" />Off</span>
      </div>
      <div className="mt-[14px] flex h-5 items-center justify-between pl-[15px] pr-[27px] tracking-[-0.150px]">
        <span className="-mt-0.5">Keep all filters</span>
        <span className="flex h-5 w-10 items-center justify-between rounded-full bg-[#117865] pl-[5px] pr-1.5 text-[11.500px] text-white">On<i className="h-[10px] w-[10px] rounded-full bg-white" /></span>
      </div>
      <div className="ml-[5px] mt-3 h-8 w-[214px] rounded-[2px] border border-dashed border-[#bebbb8] bg-white pl-2.5 leading-[30px] tracking-[-0.080px] whitespace-nowrap">Add drill-through fields here</div>
    </aside>
  );
}

function TableIcon({ kind }: { kind: "calc" | "plain" | "checked" }) {
  return (
    <svg width="22" height="20" viewBox="0 0 22 20" className="overflow-visible" fill="none" stroke="#3b3a39" strokeWidth="1.300">
      {kind === "calc" ? (
        <>
          <path d="M9 16H4q-2 0-2-2V4q0-2 2-2h10q2 0 2 2v1M2 6.500h12M2 11h7M6 2v14M11 2v4" />
          <path d="M10.500 7h8v11.500h-8z" fill="#f3f2f1" />
          <path d="M12.500 9.500h4M11 12.500h7M11 15.500h7M13.500 12v6M16 12v6" strokeWidth="1.300" />
        </>
      ) : (
        <path d="M4 2h10q2 0 2 2v10q0 2-2 2H4q-2 0-2-2V4q0-2 2-2zM2 6.500h14M2 11.500h14M6.500 2v14M11.500 2v14" />
      )}
      {kind === "checked" && (
        <g stroke="none">
          <circle cx="16.500" cy="16.500" r="7.500" fill="#117865" />
          <path d="M13.500 16.500l2.200 2.200 4-4" stroke="#fff" strokeWidth="1.600" />
        </g>
      )}
    </svg>
  );
}

function DataPane() {
  const tables: [string, "calc" | "plain" | "checked"][] = [
    ["KPIs", "calc"], ["My Measures", "calc"], ["Calendar", "checked"], ["COA", "plain"], ["Division", "plain"], ["Journal", "plain"], ["Layout", "plain"],
  ];
  return (
    <aside className="flex flex-1 flex-col border-l border-[#dddbd9] bg-[#f3f2f1] text-[#252423]">
      <div className="flex items-center justify-between pl-2.5 pr-0.5 pt-[8px]">
        <h2 className="text-[19px] font-semibold leading-8 tracking-[-0.300px]">Data</h2>
        <ChevronsRight className="h-7 w-7" strokeWidth={1.2} />
      </div>
      <div className="ml-[5px] mt-[17px] flex h-[30px] w-[215px] items-center rounded-[5px] border border-[#d1d1d1] border-b-[#605e5c] bg-white pl-[14px] text-[17px] text-[#707070]">
        <Search className="mr-2 h-5 w-5 text-[#424242]" strokeWidth={1.3} />
        <span className="mt-0.5 tracking-[-0.200px]">Search</span>
      </div>
      <ul className="pt-[11px] text-[15px] tracking-[-0.200px] text-[#3b3a39]">
        {tables.map(([n, kind]) => (
          <li key={n} className="flex h-[30px] items-center pl-[11px]">
            <ChevronRight className="h-[25px] w-[25px]" strokeWidth={1} />
            <span className="-ml-px w-6"><TableIcon kind={kind} /></span>
            {n}
          </li>
        ))}
      </ul>
    </aside>
  );
}

/* ------------------------------------------------------------------ */
/* Footer bars                                                         */
/* ------------------------------------------------------------------ */

function PageTabs() {
  return (
    <div className="flex h-11 bg-[#f3f2f1]">
      <svg width="159" height="44" viewBox="0 0 159 44" fill="none" stroke="#484644" strokeWidth="1.500">
        <path d="M15 9h23.500v14H15zM27 23v3.500M22.500 27h9" />
        <rect x="13" y="35" width="30" height="3" rx="1.500" fill="#117865" stroke="none" />
        <rect x="75.500" y="7" width="15" height="24" rx="2" /><path d="M82 27.500h2.500" />
        <path d="M123 16v11l-6-5.500zM145 16v11l6-5.500z" fill={SILVER} stroke="none" />
      </svg>
      <div className="w-[95px] border-x border-[#979593] border-b-[5px] border-b-[#117865] bg-white pt-1 text-center text-[14.500px] font-semibold leading-[38px] tracking-[-0.500px] text-[#252423]">Page 1</div>
      <div className="flex w-[49px] items-center justify-center bg-[#117865] pb-1">
        <svg width="14" height="14" viewBox="0 0 14 14"><path d="M7 0v14M0 7h14" stroke="#fff" strokeWidth="4" /></svg>
      </div>
    </div>
  );
}

function StatusBar() {
  return (
    <footer className="flex h-7 items-center justify-between overflow-hidden border-t border-[#dddbd9] bg-[#f3f2f1] text-[14px] text-[#484644]">
      <span className="-ml-1 mt-1 tracking-[-0.050px]">Page 1 of 1</span>
      <div className="mt-0.5 flex items-center pr-[21px]">
        <svg width="154" height="20" viewBox="0 0 154 20" fill="none" stroke="#605e5c" strokeWidth="1">
          <path d="M0 10h6M144 10h10M149 5v10" strokeWidth="2" />
          <path d="M12 10.500h125M74 7v7" />
          <path d="M60 4h5v13h-5z" fill="#605e5c" stroke="none" />
        </svg>
        <span className="ml-4 w-[52px] text-[14.500px] tracking-[-0.500px] text-[#605e5c]">83%</span>
        <svg width="21" height="17" viewBox="0 0 21 17" fill="none" stroke="#605e5c">
          <path d="M1 1h19v15H1z" strokeWidth="1.700" />
          <path d="M4.500 6.500v-2H7M14 4.500h2.500v2M4.500 10.500v2H7M14 12.500h2.500v-2" strokeWidth="1.200" />
        </svg>
      </div>
    </footer>
  );
}

export default function App() {
  return (
    <div className="flex h-[973px] w-[1908px] flex-col overflow-hidden bg-white font-['Open_Sans','Noto_Sans',sans-serif]">
      <Ribbon />
      <div className="flex h-[790px]">
        <Rail />
        <main className="flex w-[1417px] shrink-0 flex-col">
          <div className="flex h-[746px]">
            <div className="w-[1376px] overflow-hidden bg-white"><ReportPage /></div>
            <FiltersPane />
          </div>
          <PageTabs />
        </main>
        <VisualizationsPane />
        <DataPane />
      </div>
      <StatusBar />
    </div>
  );
}
